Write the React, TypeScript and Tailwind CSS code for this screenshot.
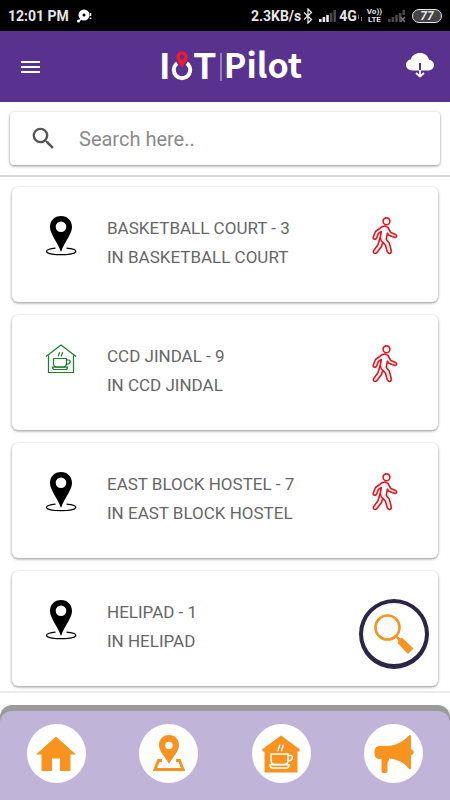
import type { ReactNode } from 'react';

type Place = {
  name: string;
  count: number;
  kind: 'pin' | 'cafe';
};

const PLACES: Place[] = [
  { name: 'BASKETBALL COURT', count: 3, kind: 'pin' },
  { name: 'CCD JINDAL', count: 9, kind: 'cafe' },
  { name: 'EAST BLOCK HOSTEL', count: 7, kind: 'pin' },
  { name: 'HELIPAD', count: 1, kind: 'pin' },
];

function PinIcon() {
  return (
    <svg viewBox="0 0 32 42" className="w-8 h-[42px]" aria-hidden="true">
      <path
        d="M10.5 33.2C4.800 33.800 1.500 34.800 1.500 36.300C1.500 38.300 8 39.700 16 39.700S30.800 38.300 30.800 36.300C30.800 34.800 27.200 33.700 21.500 33.200"
        fill="none"
        stroke="#000"
        strokeWidth="1.2"
      />
      <path
        d="M16 1C9.500 1 5 5.700 5 12C5 19 12.500 27 16 37C19.500 27 27 19 27 12C27 5.700 22.500 1 16 1ZM16 6.500A5.300 5.300 0 1 1 16 17.100A5.300 5.300 0 0 1 16 6.500Z"
        fill="#000"
        fillRule="evenodd"
      />
    </svg>
  );
}

function CafeIcon() {
  return (
    <svg
      viewBox="0 0 32 32"
      className="w-8 h-8"
      fill="none"
      stroke="#1b7d26"
      strokeWidth="1.2"
      aria-hidden="true"
    >
      <path d="M3.500 12.500V29.500H28.500V12.500M1 13.500L16 2L31 13.500" />
      <path d="M8.500 15.500H21.500V20C21.500 22.500 20.500 24 18.500 24H11.500C9.500 24 8.500 22.500 8.500 20Z" />
      <path d="M21.500 17H24C26 17 25.800 21.500 21.300 21.300M7.500 24.200H22.500C22.500 26 21.500 26.500 20.500 26.500H9.500C8.500 26.500 7.500 26 7.500 24.200Z" />
      <path d="M13.500 13.500C12.500 12 15 10.500 14.500 9M16.500 13.500C15.800 12 18 10.500 17.500 9" />
    </svg>
  );
}

function WalkIcon() {
  return (
    <svg
      viewBox="0 0 26 38"
      className="w-[26px] h-[38px] mt-[3px]"
      fill="none"
      stroke="#ee1119"
      strokeWidth="1.6"
      strokeLinejoin="round"
      aria-hidden="true"
    >
      <circle cx="14.500" cy="4.300" r="3.400" />
      <path d="M10.300 9.700C12 8.700 14.700 9.300 16.200 10.800L18.800 15.500L23.500 17.400C25.500 18.600 24.300 21 22.300 20.300L17 18.200L15.400 16.200L14.300 22.300L17.300 26.200L19.300 33.800C19.700 36.800 16.300 37.300 15.300 34.800L13.500 28.300L10.800 25.300L9.500 29.500L4.800 35.700C2.700 37.700 0.500 35.300 2 33.300L6 27.800L8.300 20.300L9.300 14.500L6.500 16.300L4.500 21.200C3.500 23.300 0.700 22.500 1.300 20L3.500 14.500Z" />
      <path d="M8.300 20.300C8.300 22.500 9 24 10.800 25.300" />
    </svg>
  );
}

function HomeIcon() {
  return (
    <svg viewBox="0 0 40 36" className="w-10 h-9" fill="#f7931e" aria-hidden="true">
      <path d="M20 0.500L40 18.500H34.500V35H24V22.500H16V35H5.500V18.500H0Z" />
    </svg>
  );
}

function MapIcon() {
  return (
    <svg viewBox="0 0 34 38" className="w-[34px] h-[38px]" aria-hidden="true">
      <path
        d="M17 0C11 0 7 4.500 7 10C7 17 13 21 17 29C21 21 27 17 27 10C27 4.500 23 0 17 0ZM17 6.700A3.800 3.800 0 1 1 17 14.300A3.800 3.800 0 0 1 17 6.700Z"
        fill="#f7931e"
        fillRule="evenodd"
      />
      <path
        d="M10 25.500H6.500L3 34.500H31L27.500 25.500H24"
        fill="none"
        stroke="#f7931e"
        strokeWidth="3"
      />
    </svg>
  );
}

function CafeSolidIcon() {
  return (
    <svg viewBox="0 0 40 38" className="w-10 h-[38px]" aria-hidden="true">
      <path d="M20 0.500L39 14.500L38 16.500H36.500V37.500H3.500V16.500H2L1 14.500Z" fill="#f7931e" />
      <g fill="none" stroke="#fff" strokeWidth="1.500">
        <path d="M10 19H27V25C27 28 25.500 29.500 23 29.500H14C11.500 29.500 10 28 10 25Z" />
        <path d="M27 20.500H29.500C32.500 20.500 32 26 26.800 26M9 29.800H28C28 32 27 33 25.500 33H11.500C10 33 9 32 9 29.800Z" />
        <path d="M17.500 16C16 14 19.500 12 18.500 9.500M21 16C19.500 14 23 12 22 9.500" />
      </g>
    </svg>
  );
}

function MegaphoneIcon() {
  return (
    <svg viewBox="0 0 40 38" className="w-10 h-[38px]" fill="#f7931e" aria-hidden="true">
      <path d="M6 11H13C21 11 29 7 34.500 0.800C35 0 37 0 37 1.500V33C37 34.500 35 34.500 34.500 33.500C30 27.500 23 24 15 23.500C15.500 25.500 14 26 13.500 28V36.500C13.500 38.500 7.500 38.500 7.500 36.500V24H6C2 24 0.500 21.500 0.500 17.500S2 11 6 11Z" />
      <path d="M37 14.500C40.500 15 40.500 19.500 37 20Z" />
    </svg>
  );
}

function SignalIcon({ bars, off }: { bars: number; off?: boolean }) {
  return (
    <svg viewBox="0 0 18 14" className="w-[18px] h-3.5" aria-hidden="true">
      {[3, 5, 7, 9, 12].map((h, i) => (
        <rect
          key={h}
          x={i * 3.6}
          y={13 - h}
          width="2.600"
          height={off && i === 4 ? 5 : h}
          fill={i < bars ? '#e8e8e8' : '#484848'}
        />
      ))}
      {off && <path d="M12.500 8L17 13M17 8L12.500 13" stroke="#777" strokeWidth="1.300" />}
    </svg>
  );
}

function StatusBar() {
  return (
    <div className="h-[31px] shrink-0 bg-black text-[#e6e6e6] flex items-center justify-between px-2 text-sm font-bold">
      <div className="flex items-center gap-2">
        <span>12:01 PM</span>
        <svg viewBox="0 0 16 14" className="w-4 h-3.5" aria-hidden="true">
          <path d="M2 12L5 9M13.500 4V7M13.500 8.500V10" stroke="#fff" strokeWidth="1.500" />
          <circle cx="1.500" cy="12" r="1.500" fill="#fff" />
          <circle cx="7" cy="6" r="3.500" fill="none" stroke="#fff" strokeWidth="4" />
        </svg>
      </div>
      <div className="flex items-center">
        <span>2.3KB/s</span>
        <svg viewBox="0 0 10 16" className="w-2.5 h-4 ml-0.5" fill="none" stroke="#e6e6e6" strokeWidth="1.300" aria-hidden="true">
          <path d="M1 4.500L8.500 11.500L5 15V1L8.500 4.500L1 11.500" />
        </svg>
        <span className="ml-1.5 flex">
          <SignalIcon bars={3} />
        </span>
        <span className="ml-0.5">4G</span>
        <svg viewBox="0 0 6 8" className="w-1.5 h-2 mt-1" stroke="#777" aria-hidden="true">
          <path d="M1.500 1V5M4.500 3V7" />
        </svg>
        <span className="ml-1 text-[8px] leading-none flex flex-col items-center">
          <span>Vo))</span>
          <span>LTE</span>
        </span>
        <span className="ml-1.5 flex">
          <SignalIcon bars={0} off />
        </span>
        <span className="ml-1.5 w-[30px] h-3.5 rounded-full border border-[#e6e6e6] bg-[#444] text-xs leading-none italic flex items-center justify-center">
          77
        </span>
      </div>
    </div>
  );
}

function Logo() {
  return (
    <h1 className="flex items-center text-white font-bold pl-3" aria-label="IoT Pilot">
      <span className="font-['Liberation_Sans',sans-serif] text-4xl">I</span>
      <svg viewBox="0 0 24 34" className="w-6 h-[34px]" aria-hidden="true">
        <circle cx="12" cy="20" r="8.200" fill="none" stroke="#fff" strokeWidth="4" />
        <path d="M12 21L4.500 9H19.500Z" fill="#58328e" />
        <path
          d="M12 1.500C8.800 1.500 6.400 3.900 6.400 7C6.400 11 10 13.500 12 18C14 13.500 17.600 11 17.600 7C17.600 3.900 15.200 1.500 12 1.500ZM12 4.700A2.300 2.300 0 1 1 12 9.300A2.300 2.300 0 0 1 12 4.700Z"
          fill="#ee1b2e"
          fillRule="evenodd"
        />
      </svg>
      <span className="font-['Liberation_Sans',sans-serif] text-4xl">T</span>
      <span className="w-0.5 h-7 ml-1 mr-0.5 bg-[#9780b9]" />
      <span className="font-['Noto_Sans_CJK_SC',sans-serif] text-[34px] leading-10 pb-1.5">Pilot</span>
    </h1>
  );
}

function Header() {
  return (
    <header className="h-[71px] shrink-0 bg-[#58328e] px-4 flex items-center justify-between">
      <button aria-label="Menu" className="w-7 flex flex-col items-center gap-[3px]">
        <span className="w-[19px] h-0.5 bg-white" />
        <span className="w-[19px] h-0.5 bg-white" />
        <span className="w-[19px] h-0.5 bg-white" />
      </button>
      <Logo />
      <button aria-label="Download" className="pb-1">
        <svg viewBox="0 0 28 26" className="w-7 h-[26px]" aria-hidden="true">
          <path
            d="M6.500 18.500C2.500 18.500 0 16 0 12.800C0 10 2 7.800 4.800 7.300C5.800 3.500 9.500 1 14 1C18.500 1 22 3.500 22.800 7.500C26 8 28 10.200 28 13C28 16 25.500 18.500 22 18.500Z"
            fill="#fff"
          />
          <path d="M14 11V19" stroke="#58328e" strokeWidth="2" />
          <path d="M14 18V24M10 21L14 24.500L18 21" stroke="#fff" strokeWidth="1.800" fill="none" />
        </svg>
      </button>
    </header>
  );
}

function PlaceCard({ place }: { place: Place }) {
  return (
    <li className="h-[115px] bg-white rounded-md shadow-[0_1px_3px_rgba(0,0,0,0.45)] flex items-start pt-[27px] pl-8 pr-10">
      <div className="w-[63px] shrink-0 pt-px pl-px">{place.kind === 'pin' ? <PinIcon /> : <CafeIcon />}</div>
      <div className="flex-1 text-[17px] leading-[29px] text-[#666]">
        <p>
          {place.name} - {place.count}
        </p>
        <p>IN {place.name}</p>
      </div>
      <WalkIcon />
    </li>
  );
}

function NavButton({ label, children }: { label: string; children: ReactNode }) {
  return (
    <button
      aria-label={label}
      className="w-[59px] h-[59px] rounded-full bg-white flex items-center justify-center justify-self-center"
    >
      {children}
    </button>
  );
}

export default function App() {
  return (
    <div className="min-h-screen bg-white flex flex-col font-[Roboto,sans-serif]">
      <StatusBar />
      <Header />
      <main className="flex-1 relative">
        <div className="px-2.5 pt-2.5 pb-2.5">
          <label className="h-[53px] flex items-center bg-white rounded-sm shadow-[0_1px_3px_rgba(0,0,0,0.45)] pl-[19px]">
            <svg viewBox="0 0 24 24" className="w-[29px] h-[29px] shrink-0" fill="#555" aria-hidden="true">
              <path d="M15.500 14h-.79l-.28-.27A6.470 6.470 0 0 0 16 9.500 6.500 6.500 0 1 0 9.500 16c1.610 0 3.090-.59 4.230-1.570l.27.28v.79l5 4.990L20.490 19l-4.990-5zm-6 0C7.010 14 5 11.990 5 9.500S7.010 5 9.500 5 14 7.010 14 9.500 11.990 14 9.500 14z" />
            </svg>
            <input
              type="text"
              aria-label="Search"
              placeholder="Search here.."
              className="ml-[21px] flex-1 min-w-0 text-xl text-[#555] placeholder:text-[#8a8a8a] outline-none"
            />
          </label>
        </div>
        <ul className="border-t-2 border-b-2 border-t-[#d8d8d8] border-b-[#ebebeb] px-3 pt-[10px] pb-[5px] flex flex-col gap-[13px]">
          {PLACES.map((place) => (
            <PlaceCard key={place.name} place={place} />
          ))}
        </ul>
        <button
          aria-label="Find places"
          className="absolute right-[21px] bottom-9 w-[70px] h-[70px] rounded-full bg-white border-4 border-b-[5px] border-[#2d2547] flex items-center justify-center"
        >
          <svg viewBox="0 0 40 40" className="w-10 h-10" aria-hidden="true">
            <circle cx="13.500" cy="13.500" r="12" fill="none" stroke="#f7931e" strokeWidth="2.600" />
            <path d="M22 23.500L23.500 22L26.500 24.500L28.500 24L39.500 34.500L34 40L23.500 29L24.500 27Z" fill="#f7931e" />
          </svg>
        </button>
      </main>
      <footer className="bg-[#9b9b9b] rounded-t-xl pt-1.5">
        <nav className="h-[89px] pt-[13px] rounded-t-xl bg-[#c0b4d8] grid grid-cols-4">
          <NavButton label="Home">
            <HomeIcon />
          </NavButton>
          <NavButton label="Map">
            <MapIcon />
          </NavButton>
          <NavButton label="Cafes">
            <CafeSolidIcon />
          </NavButton>
          <NavButton label="Announcements">
            <MegaphoneIcon />
          </NavButton>
        </nav>
      </footer>
    </div>
  );
}
